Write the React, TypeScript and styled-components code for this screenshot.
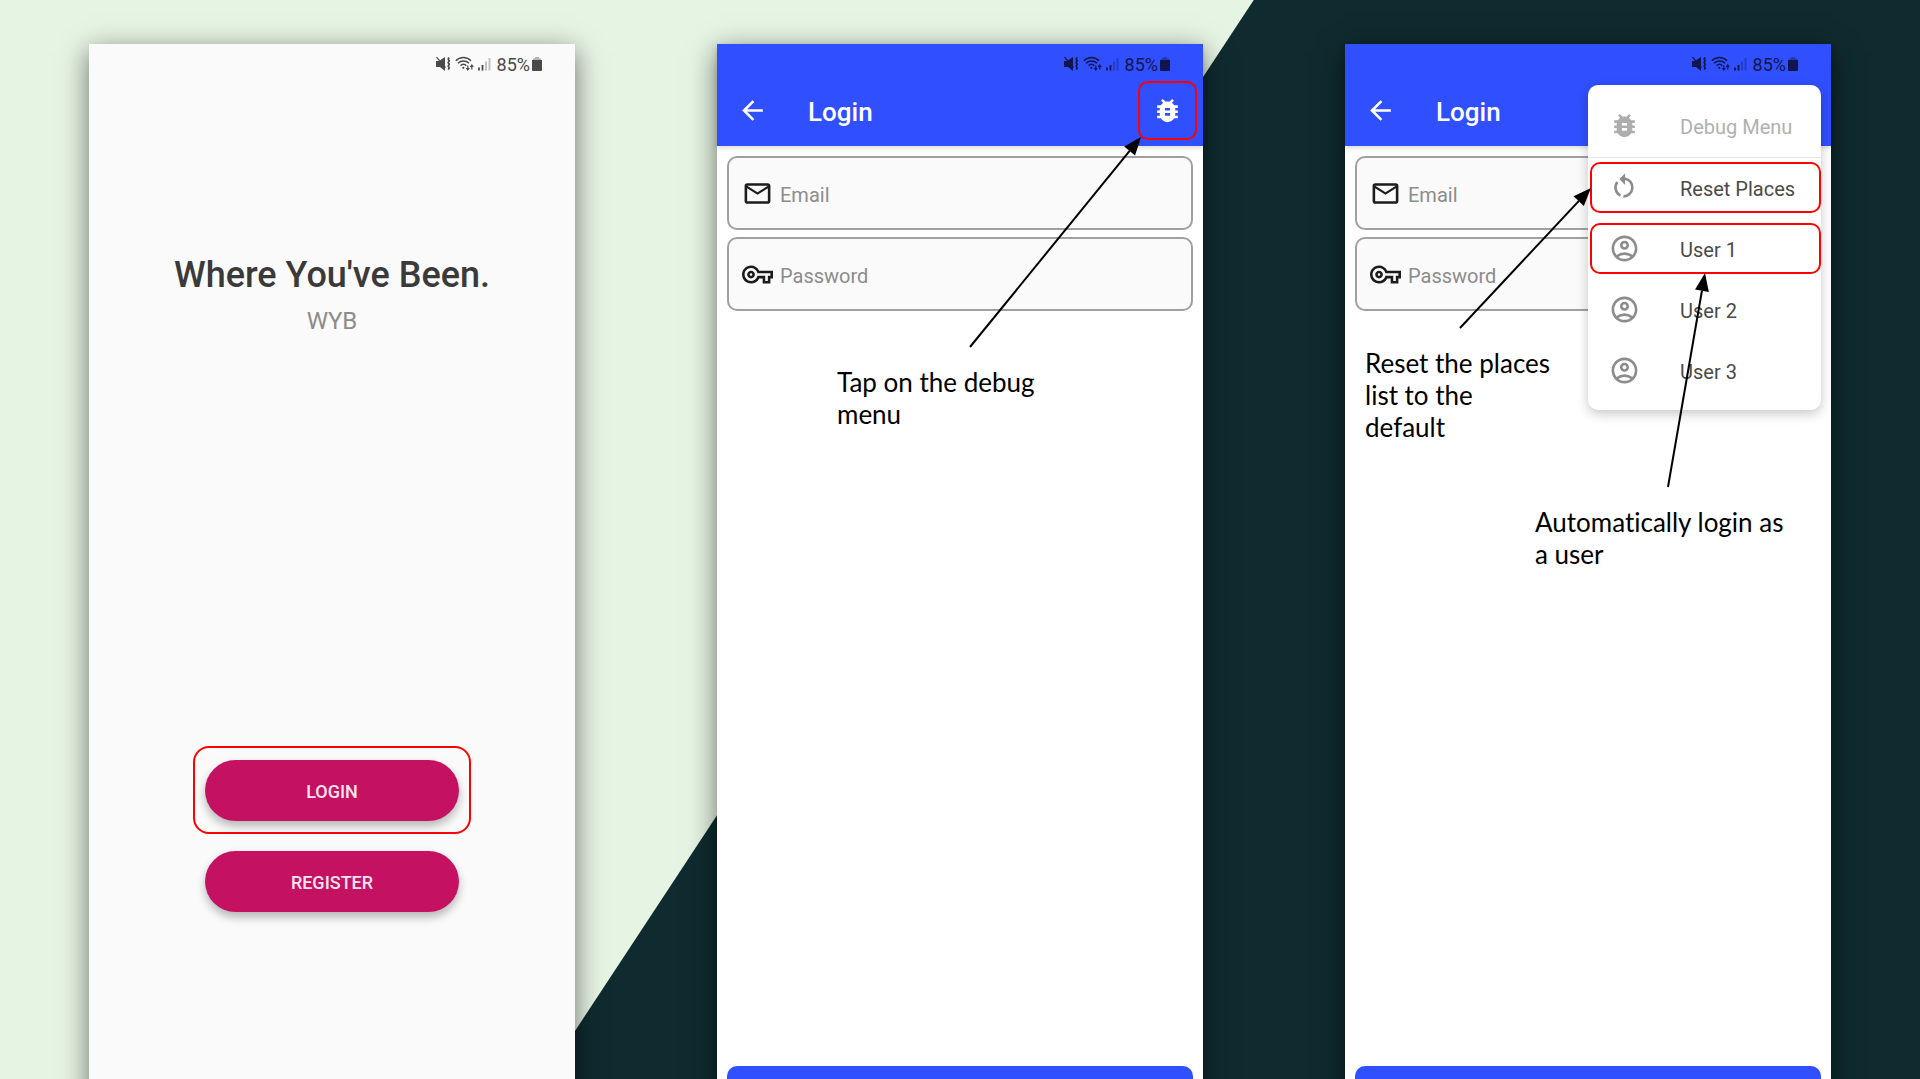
import React from 'react';
import styled, { createGlobalStyle } from 'styled-components';
import {
  MdArrowBack,
  MdBugReport,
  MdMailOutline,
  MdOutlineAccountCircle,
  MdOutlineVpnKey,
} from 'react-icons/md';

const GlobalStyle = createGlobalStyle`
  *, *::before, *::after { box-sizing: border-box; }
  body { margin: 0; font-family: Roboto, sans-serif; }
  button, input { font-family: inherit; }
`;

const Slide = styled.main`
  position: relative;
  height: 100vh;
  overflow: hidden;
  display: grid;
  grid-template-columns: repeat(3, minmax(0, 1fr));
  align-items: start;
  gap: 142px;
  padding: 44px 89px 0;
  background: #e6f4e3;

  &::before {
    content: '';
    position: absolute;
    inset: 0;
    background: #0f2b2f;
    clip-path: polygon(65.3% 0, 100% 0, 100% 100%, 28.3% 100%);
  }
`;

const Phone = styled.section<{ $surface: string }>`
  position: relative;
  display: flex;
  flex-direction: column;
  aspect-ratio: 9 / 20;
  background: ${(p) => p.$surface};
  box-shadow: 0 7px 26px rgba(0, 0, 0, 0.55);
`;

const StatusRow = styled.div<{ $color: string }>`
  display: flex;
  align-items: center;
  justify-content: flex-end;
  height: 31px;
  padding: 9px 33px 0 0;
  color: ${(p) => p.$color};
  font-size: 18px;
  line-height: 22px;

  svg { flex: none; }
  span { padding-top: 2px; }
`;

const StatusGlyphs = styled.svg`
  margin-right: 6px;
`;

const Top = styled.header`
  background: #304ffe;
  box-shadow: 0 2px 5px rgba(0, 0, 0, 0.15);
`;

const AppBar = styled.div`
  display: flex;
  align-items: center;
  height: 71px;
  padding: 0 6px 0 20px;
  color: #fff;
`;

const IconButton = styled.button<{ $marked?: boolean }>`
  display: grid;
  place-items: center;
  width: ${(p) => (p.$marked ? 59 : 31)}px;
  height: ${(p) => (p.$marked ? 59 : 31)}px;
  padding: 0;
  border: ${(p) => (p.$marked ? '2px solid #f00' : '0')};
  border-radius: 10px;
  background: none;
  color: inherit;
`;

const BarTitle = styled.h2`
  flex: 1;
  margin: 0 0 0 40px;
  padding-top: 2px;
  font-size: 26px;
  line-height: 30px;
  font-weight: 500;
`;

const Form = styled.form`
  flex: 1;
  display: flex;
  flex-direction: column;
  gap: 7px;
  padding: 10px;
`;

const Field = styled.label`
  display: flex;
  align-items: center;
  gap: 7px;
  height: 74px;
  padding: 0 13px;
  border: 2px solid #a0a0a0;
  border-radius: 10px;
  background: #fafafa;
  color: #1c1c1c;

  svg { flex: none; }
`;

const TextBox = styled.input`
  flex: 1;
  min-width: 0;
  height: 30px;
  padding: 3px 0 0;
  border: 0;
  outline: 0;
  background: none;
  font-size: 20px;

  &::placeholder { color: #8c8c8c; opacity: 1; }
`;

const SubmitButton = styled.button`
  height: 48px;
  margin-top: auto;
  border: 0;
  border-radius: 10px;
  background: #304ffe;
`;

const Welcome = styled.div`
  display: flex;
  flex-direction: column;
  align-items: center;
  padding-top: 180px;
`;

const AppName = styled.h1`
  margin: 0;
  color: #3a3a3a;
  font-size: 36px;
  line-height: 40px;
  font-weight: 500;
`;

const Tagline = styled.p`
  margin: 12px 0 0;
  color: #8c8c8c;
  font-size: 24px;
  line-height: 28px;
`;

const Actions = styled.div`
  display: flex;
  flex-direction: column;
  align-items: center;
  gap: 17px;
  margin-top: 411px;
`;

const Marked = styled.div`
  padding: 12px 10px 11px;
  border: 2px solid #f00;
  border-radius: 16px;
`;

const PillButton = styled.button`
  display: block;
  width: 254px;
  height: 61px;
  padding: 2px 0 0;
  border: 0;
  border-radius: 31px;
  background: #c51162;
  box-shadow: 0 5px 10px rgba(0, 0, 0, 0.28);
  color: #f9e4ee;
  font-size: 18px;
  font-weight: 500;
`;

const Menu = styled.ul`
  position: absolute;
  top: 41px;
  right: 10px;
  width: 233px;
  margin: 0;
  padding: 11px 0 8px;
  border-radius: 10px;
  background: #fff;
  box-shadow: 0 4px 12px rgba(0, 0, 0, 0.22);
  list-style: none;
`;

const MenuRow = styled.li<{ $heading?: boolean }>`
  padding: 4px 0 6px 2px;
  border-bottom: ${(p) => (p.$heading ? '1px solid #e6e6e6' : '0')};
`;

const MenuButton = styled.button<{ $marked?: boolean }>`
  display: flex;
  align-items: center;
  gap: 40px;
  width: 100%;
  height: 51px;
  padding: 0 0 0 17px;
  border: 2px solid ${(p) => (p.$marked ? '#f00' : 'transparent')};
  border-radius: 10px;
  background: none;
  color: #4a4a4a;
  font-size: 20px;
  line-height: 24px;
  white-space: nowrap;

  svg { flex: none; color: #8c8c8c; }
  span { padding-top: 2px; }

  &:disabled { color: #b0b0b0; }
  &:disabled svg { color: #adadad; }
`;

const Arrow = styled.svg`
  position: absolute;
  inset: 0;
  width: 100%;
  height: 100%;
  pointer-events: none;
`;

const Note = styled.p<{ $left: number; $top: number; $width: number }>`
  position: absolute;
  left: ${(p) => p.$left}px;
  top: ${(p) => p.$top}px;
  width: ${(p) => p.$width}px;
  margin: 0;
  color: #000;
  font-family: Lato, sans-serif;
  font-size: 26px;
  line-height: 32px;
  font-variant-ligatures: none;
`;

function ResetIcon() {
  return (
    <svg width="31" height="31" viewBox="0 0 24 24" fill="none" stroke="currentColor" strokeWidth="2" aria-hidden="true">
      <path d="M12 5a7 7 0 0 1-.9 13.940M6.500 7.700a7 7 0 0 0 2.400 10.600" />
      <path d="M12.500 1 8 5.500l4.500 4.500z" fill="currentColor" stroke="none" />
    </svg>
  );
}

function StatusBar({ color = '#11164f' }: { color?: string }) {
  return (
    <StatusRow $color={color}>
      <StatusGlyphs width="55" height="16" viewBox="0 0 55 16" fill="none" stroke="currentColor" aria-hidden="true">
        {/* muted speaker with vibration marks */}
        <path d="M0 5h3l6-4v14l-5-4H0z" fill="currentColor" stroke="none" />
        <path d="M.5 1.200l9 10.500" strokeWidth="1.200" />
        <path d="M13.200 1.500l-1 1.500 1 1.700-1 1.800 1 1.800-1 1.800 1 1.800-1 1.700" strokeWidth="1.700" />
        {/* wifi with traffic arrows */}
        <path d="M19.800 4.800c4.200-4.500 11-4.500 15.200 0M22 7.300c3-3 8-3 11 0M24.500 9.600c1.700-1.500 4.200-1.500 5.800 0" strokeWidth="1.500" />
        <circle cx="27.300" cy="11.800" r="1.100" fill="currentColor" stroke="none" />
        <path d="M31.800 9.500v4M30.300 12l1.500 2 1.500-2M35.800 13.500v-4M34.300 11l1.500-2 1.500 2" strokeWidth="1.200" />
        {/* signal bars */}
        <path d="M43 14.500v-3M46.500 14.500V9" strokeWidth="1.800" />
        <path d="M50 14.500V5.500M53.500 14.500V2" strokeWidth="1.800" opacity=".35" />
      </StatusGlyphs>
      <span>85%</span>
      <svg width="12" height="16" viewBox="0 0 12 16" fill="currentColor" aria-hidden="true">
        <path d="M5 1h4v1.500h2V4H3V2.500h2z" opacity=".4" />
        <path d="M2 4h10v10a1 1 0 0 1-1 1H3a1 1 0 0 1-1-1z" />
      </svg>
    </StatusRow>
  );
}

function Pointer({ from, to }: { from: [number, number]; to: [number, number] }) {
  const angle = Math.atan2(to[1] - from[1], to[0] - from[0]);
  const baseX = to[0] - 18 * Math.cos(angle);
  const baseY = to[1] - 18 * Math.sin(angle);
  const dx = 7 * Math.sin(angle);
  const dy = 7 * Math.cos(angle);
  return (
    <g>
      <line x1={from[0]} y1={from[1]} x2={baseX} y2={baseY} stroke="#000" strokeWidth="2" />
      <polygon points={`${to[0]},${to[1]} ${baseX - dx},${baseY + dy} ${baseX + dx},${baseY - dy}`} />
    </g>
  );
}

function LoginScreen({ debugOpen = false, children }: { debugOpen?: boolean; children: React.ReactNode }) {
  return (
    <Phone $surface="#fff">
      <Top>
        <StatusBar />
        <AppBar>
          <IconButton aria-label="Back"><MdArrowBack size={31} /></IconButton>
          <BarTitle>Login</BarTitle>
          {!debugOpen && (
            <IconButton $marked aria-label="Debug menu"><MdBugReport size={31} /></IconButton>
          )}
        </AppBar>
      </Top>
      <Form onSubmit={(e) => e.preventDefault()}>
        <Field>
          <MdMailOutline size={31} />
          <TextBox type="email" placeholder="Email" aria-label="Email" />
        </Field>
        <Field>
          <MdOutlineVpnKey size={31} />
          <TextBox type="password" placeholder="Password" aria-label="Password" />
        </Field>
        <SubmitButton aria-label="Log in" />
      </Form>
      {children}
    </Phone>
  );
}

export default function App() {
  return (
    <>
      <GlobalStyle />
      <Slide>
        <Phone $surface="#fafafa">
          <StatusBar color="#4a4a4a" />
          <Welcome>
            <AppName>Where You've Been.</AppName>
            <Tagline>WYB</Tagline>
            <Actions>
              <Marked><PillButton>LOGIN</PillButton></Marked>
              <PillButton>REGISTER</PillButton>
            </Actions>
          </Welcome>
        </Phone>

        <LoginScreen>
          <Arrow><Pointer from={[253, 303]} to={[424, 93]} /></Arrow>
          <Note $left={120} $top={322} $width={220}>Tap on the debug menu</Note>
        </LoginScreen>

        <LoginScreen debugOpen>
          <Menu>
            <MenuRow $heading>
              <MenuButton disabled><MdBugReport size={31} /><span>Debug Menu</span></MenuButton>
            </MenuRow>
            <MenuRow>
              <MenuButton $marked><ResetIcon /><span>Reset Places</span></MenuButton>
            </MenuRow>
            {[1, 2, 3].map((n) => (
              <MenuRow key={n}>
                <MenuButton $marked={n === 1}><MdOutlineAccountCircle size={31} /><span>User {n}</span></MenuButton>
              </MenuRow>
            ))}
          </Menu>
          <Arrow>
            <Pointer from={[115, 284]} to={[246, 144]} />
            <Pointer from={[323, 443]} to={[360, 229]} />
          </Arrow>
          <Note $left={20} $top={303} $width={190}>Reset the places list to the default</Note>
          <Note $left={190} $top={462} $width={260}>Automatically login as a user</Note>
        </LoginScreen>
      </Slide>
    </>
  );
}
